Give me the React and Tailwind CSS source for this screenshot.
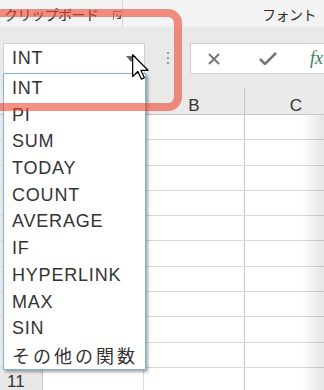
import React from 'react'

const items = ['INT', 'PI', 'SUM', 'TODAY', 'COUNT', 'AVERAGE', 'IF', 'HYPERLINK', 'MAX', 'SIN']
const rows = [1, 2, 3, 4, 5, 6, 7, 8, 9, 10, 11]

const App = () => {
  return (
    <div className="relative w-[324px] h-[390px] overflow-hidden bg-white font-['Liberation_Sans','Noto_Sans_CJK_JP',sans-serif] text-[#333]">
      {/* ribbon group labels */}
      <div className="flex h-[27px] bg-[#f3f3f3]">
        <div className="flex w-[123px] shrink-0 items-center border-r border-[#d6d6d6] pl-[4px] pt-[1px]">
          <span className="font-['Noto_Sans_CJK_JP',sans-serif] text-[14px] tracking-[-0.5px] text-[#2e2e2e]">クリップボード</span>
          <svg className="ml-[14px] mt-[2px]" width="9" height="9" viewBox="0 0 9 9">
            <path d="M0.5 8.5V0.5H8.5" fill="none" stroke="#7a7a7a" />
            <path d="M3 3L7.5 7.5M7.5 4V7.5H4" fill="none" stroke="#555" />
          </svg>
        </div>
        <div className="flex flex-1 items-center pl-[139px] pt-[1px]">
          <span className="font-['Noto_Sans_CJK_JP',sans-serif] text-[14px] tracking-[-0.5px] text-[#2e2e2e]">フォント</span>
        </div>
      </div>

      {/* formula bar */}
      <div className="flex h-[61px] items-start bg-[#e9e9e9] pt-[16px]">
        <div className="ml-[3px] flex h-[31px] w-[142px] shrink-0 items-center border border-[#d2d2d2] bg-white pl-[8px]">
          <span className="flex-1 text-[18px] tracking-[0.8px]">INT</span>
          <svg className="mr-[8px]" width="10" height="6" viewBox="0 0 10 6">
            <path d="M0 0H10L5 6Z" fill="#666" />
          </svg>
        </div>
        <div className="flex w-[45px] shrink-0 flex-col items-center gap-[3px] pt-[9px]">
          <div className="h-[2px] w-[2px] bg-[#9a9a9a]" />
          <div className="h-[2px] w-[2px] bg-[#9a9a9a]" />
          <div className="h-[2px] w-[2px] bg-[#9a9a9a]" />
        </div>
        <div className="flex h-[31px] flex-1 items-center border border-r-0 border-[#d2d2d2] bg-white">
          <svg className="ml-[17px]" width="12" height="12" viewBox="0 0 12 12">
            <path d="M1 1L11 11M11 1L1 11" stroke="#777" strokeWidth="2" />
          </svg>
          <svg className="ml-[39px]" width="18" height="13" viewBox="0 0 18 13">
            <path d="M1 7L6 12L17 1" fill="none" stroke="#777" strokeWidth="2.6" />
          </svg>
          <span className="ml-[33px] font-['Liberation_Serif',serif] text-[18px] italic text-[#3b7f58]">fx</span>
        </div>
      </div>

      {/* column headers */}
      <div className="flex h-[27px] border-b border-[#c8c8c8] bg-[#eaeaea] text-[17px]">
        <div className="w-[43px] shrink-0 border-r border-[#cfcfcf]" />
        <div className="w-[101px] shrink-0 border-r border-[#cfcfcf]" />
        <div className="w-[101px] shrink-0 border-r border-[#c4c4c4] pt-[9px] text-center leading-[17px]">B</div>
        <div className="w-[102px] shrink-0 pt-[9px] text-center leading-[17px]">C</div>
      </div>

      {/* grid */}
      {rows.map((n) => (
        <div key={n} className="flex h-[25.3px] border-b border-[#d9d9d9]">
          <div className="w-[43px] shrink-0 border-r border-[#c8c8c8] bg-[#e8e8e8] pl-[7px] pt-[4px] text-[17px] leading-[20px]">
            {n === 11 ? n : ''}
          </div>
          <div className="w-[101px] shrink-0 border-r border-[#dcdcdc]" />
          <div className="w-[101px] shrink-0 border-r border-[#c9c9c9]" />
          <div className="flex-1" />
        </div>
      ))}

      {/* right edge shading */}
      <div className="absolute right-0 top-[115px] bottom-0 w-[22px] bg-linear-to-r from-transparent to-black/10" />

      {/* dropdown list */}
      <div className="absolute left-[3px] top-[73px] h-[297px] w-[143px] border border-[#7fb2d9] bg-white pt-[1px] shadow-[2px_2px_3px_rgba(0,0,0,0.35)]">
        {items.map((t) => (
          <div key={t} className="h-[26.7px] pl-[8px] text-[18px] leading-[26.7px] tracking-[0.8px] text-[#333]">
            {t}
          </div>
        ))}
        <div className="h-[26.7px] pl-[8px] font-['Noto_Sans_CJK_JP',sans-serif] text-[18px] leading-[26.7px] tracking-[3px] text-[#333]">
          その他の関数
        </div>
      </div>

      {/* highlight box */}
      <div className="absolute left-[-20px] top-[9px] h-[102px] w-[202px] rounded-[14px] border-[8px] border-[rgba(238,70,50,0.6)]" />

      {/* mouse pointer */}
      <svg className="absolute left-[132px] top-[54px]" width="17" height="26" viewBox="0 0 12.5 19">
        <path d="M0.5 0.5V16.5L4.3 12.8L6.9 18.4L9.1 17.4L6.6 11.9H11.8Z" fill="#fff" stroke="#000" strokeWidth="0.9" strokeLinejoin="round" />
      </svg>
    </div>
  )
}

export default App
